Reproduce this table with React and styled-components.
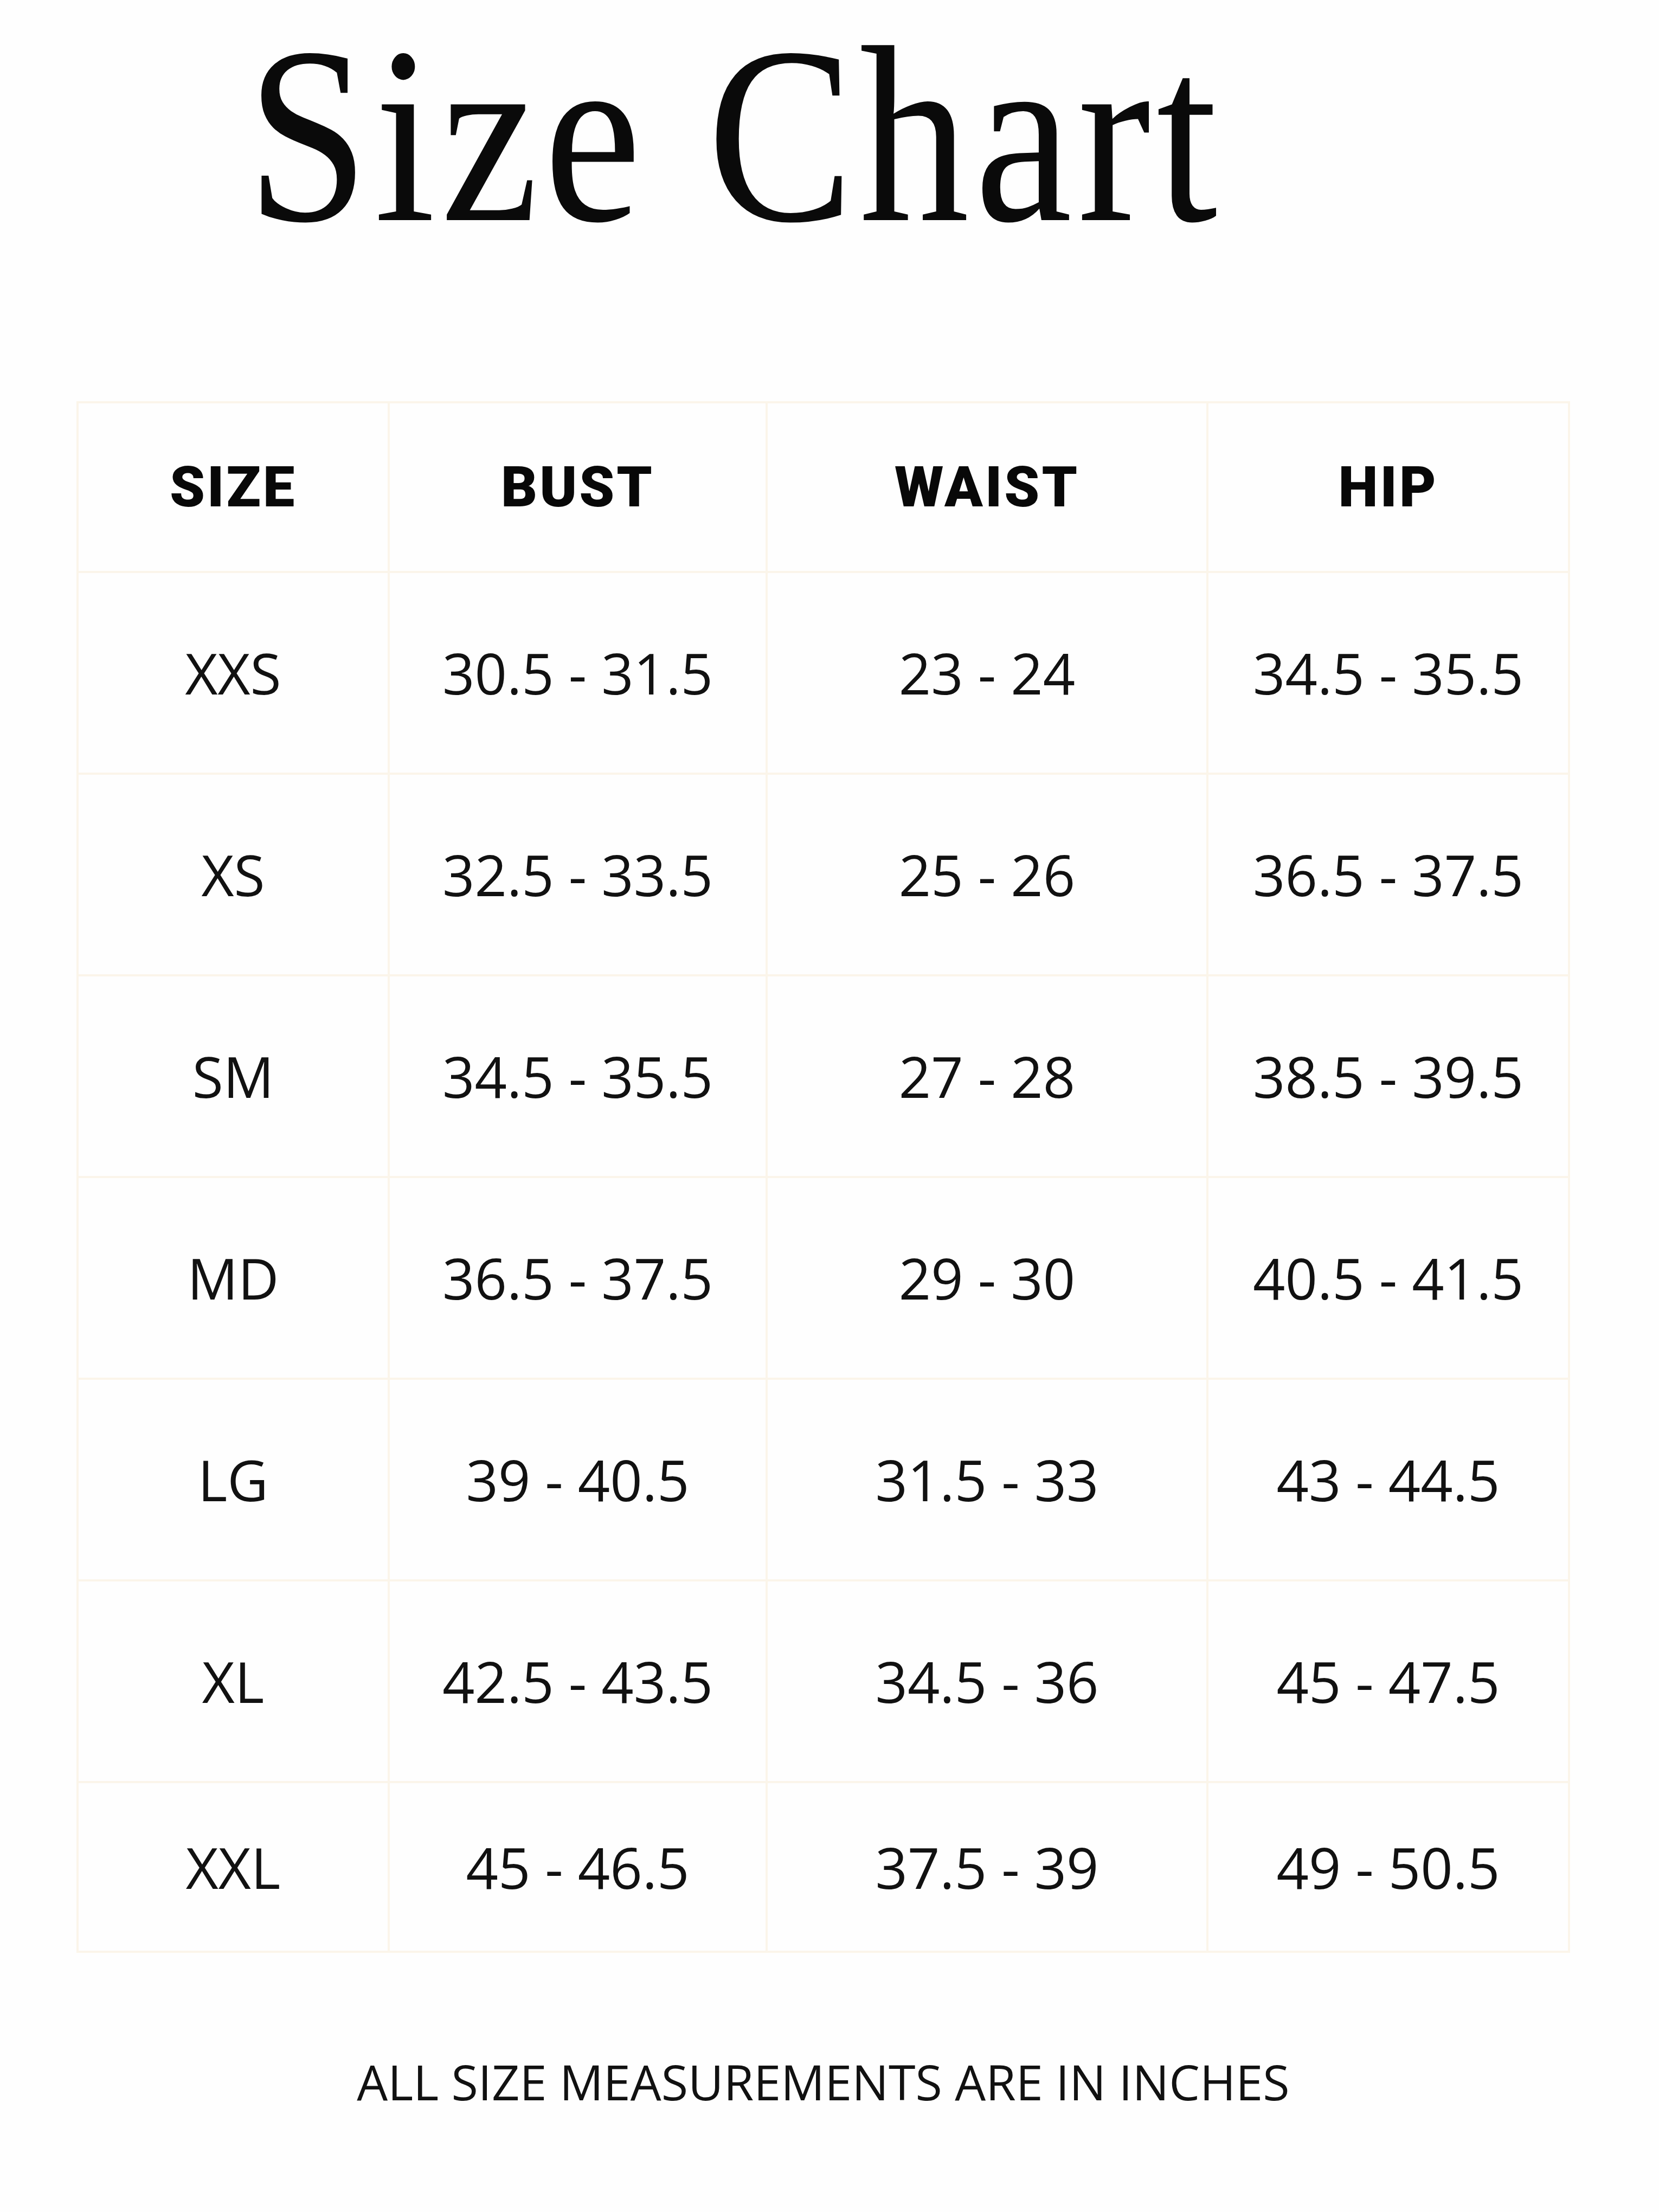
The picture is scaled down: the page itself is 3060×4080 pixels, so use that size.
import React from "react";
import styled, { createGlobalStyle } from "styled-components";

const GlobalStyle = createGlobalStyle`
  html, body {
    margin: 0;
    padding: 0;
    background: #fefefe;
  }
  * {
    box-sizing: border-box;
  }
`;

const columns = [
  { key: "size", label: "SIZE", width: 574 },
  { key: "bust", label: "BUST", width: 697 },
  { key: "waist", label: "WAIST", width: 813 },
  { key: "hip", label: "HIP", width: 667 },
];

const rows = [
  { size: "XXS", bust: "30.5 - 31.5", waist: "23 - 24", hip: "34.5 - 35.5" },
  { size: "XS", bust: "32.5 - 33.5", waist: "25 - 26", hip: "36.5 - 37.5" },
  { size: "SM", bust: "34.5 - 35.5", waist: "27 - 28", hip: "38.5 - 39.5" },
  { size: "MD", bust: "36.5 - 37.5", waist: "29 - 30", hip: "40.5 - 41.5" },
  { size: "LG", bust: "39 - 40.5", waist: "31.5 - 33", hip: "43 - 44.5" },
  { size: "XL", bust: "42.5 - 43.5", waist: "34.5 - 36", hip: "45 - 47.5" },
  { size: "XXL", bust: "45 - 46.5", waist: "37.5 - 39", hip: "49 - 50.5" },
];

const SizeChart = () => (
  <Page>
    <GlobalStyle />
    <TitleRow>
      <Title>Size Chart</Title>
    </TitleRow>
    <Table>
      {columns.map((col) => (
        <HeadCell key={col.key}>{col.label}</HeadCell>
      ))}
      {rows.map((row) =>
        columns.map((col) => <Cell key={`${row.size}-${col.key}`}>{row[col.key]}</Cell>)
      )}
    </Table>
    <Note>ALL SIZE MEASUREMENTS ARE IN INCHES</Note>
  </Page>
);

export default SizeChart;

const lineColor = "#fbf5ea";

const Page = styled.div`
  width: 3060px;
  min-height: 4080px;
  background: #fefefe;
  display: flex;
  flex-direction: column;
  color: #111;
`;

const TitleRow = styled.div`
  padding-left: 455px;
  height: 515px;
`;

const Title = styled.h1`
  display: inline-block;
  margin: 0;
  font-family: "Liberation Serif", "Times New Roman", serif;
  font-weight: 400;
  font-size: 465px;
  line-height: normal;
  letter-spacing: 12px;
  white-space: nowrap;
  color: #0a0a0a;
  transform: translateY(-18px) scaleX(0.87);
  transform-origin: left center;
`;

const Table = styled.div`
  margin: 225px 0 0 141px;
  width: ${4 + columns.reduce((sum, c) => sum + c.width, 0)}px;
  display: grid;
  grid-template-columns: ${columns.map((c) => `${c.width}px`).join(" ")};
  grid-template-rows: 313px repeat(6, 372px) 313px;
  border-top: 4px solid ${lineColor};
  border-left: 4px solid ${lineColor};
`;

const Cell = styled.div`
  display: flex;
  align-items: center;
  justify-content: center;
  border-right: 4px solid ${lineColor};
  border-bottom: 4px solid ${lineColor};
  font-family: "Open Sans", "Liberation Sans", sans-serif;
  font-weight: 400;
  font-size: 104px;
  line-height: 1;
  white-space: nowrap;
  color: #111;
`;

const HeadCell = styled(Cell)`
  font-family: Roboto, "Liberation Sans", sans-serif;
  font-weight: 900;
  font-size: 104px;
  letter-spacing: 4px;
  color: #080808;
`;

const Note = styled.p`
  margin: 192px 0 0 141px;
  width: 2755px;
  text-align: center;
  font-family: "Open Sans", "Liberation Sans", sans-serif;
  font-weight: 400;
  font-size: 90px;
  line-height: 1;
  color: #111;
`;
